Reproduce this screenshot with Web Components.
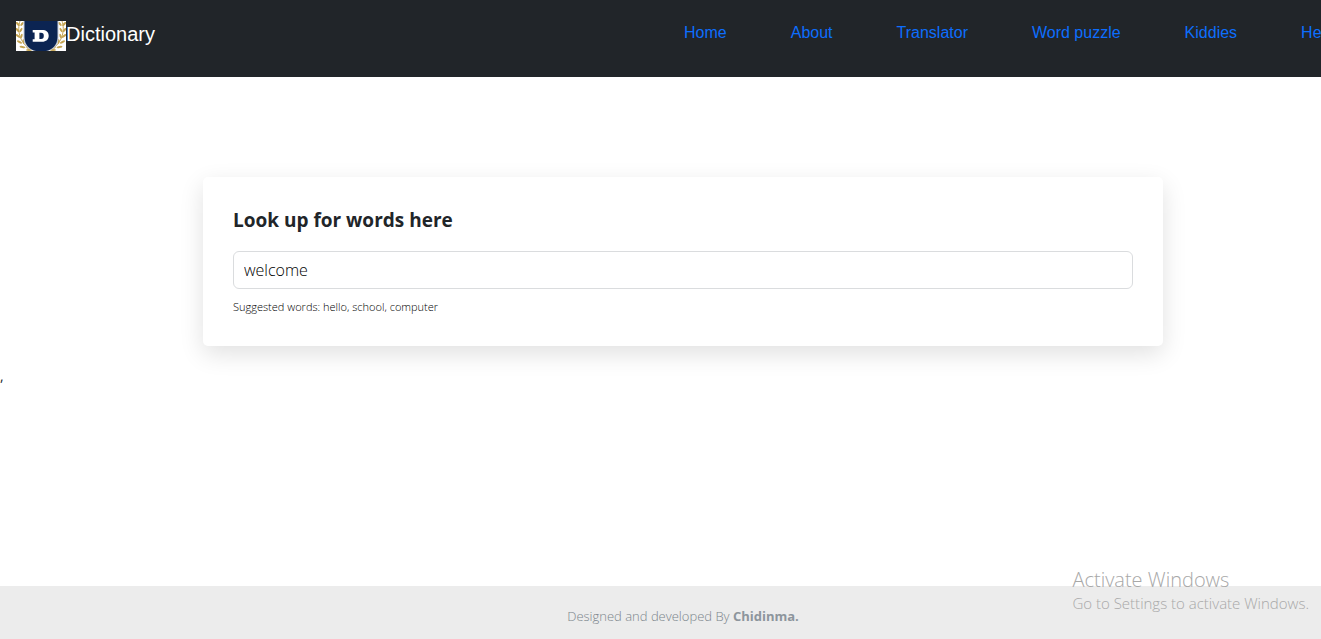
<!DOCTYPE html>
<html lang="en">
<head>
<meta charset="utf-8">
<title>Dictionary</title>
<style>
  html, body { margin: 0; height: 100%; }
  body { overflow: hidden; background: #fff; color: #212529; font-family: "Open Sans", "Noto Sans", sans-serif; }
</style>
</head>
<body>
<dictionary-app>
  <site-header slot="header">
    <brand-logo slot="brand">Dictionary</brand-logo>
    <nav-link href="#home">Home</nav-link>
    <nav-link href="#about">About</nav-link>
    <nav-link href="#translator">Translator</nav-link>
    <nav-link href="#puzzle">Word puzzle</nav-link>
    <nav-link href="#kiddies">Kiddies</nav-link>
    <nav-link href="#help">Help</nav-link>
  </site-header>
  <word-search value="welcome">
    <span slot="title">Look up for words here</span>
    <span slot="hint">Suggested words: hello, school, computer</span>
  </word-search>
  <stray-text>,</stray-text>
  <site-footer slot="footer">Designed and developed By <strong>Chidinma.</strong></site-footer>
</dictionary-app>
<activation-notice>
  <span slot="title">Activate Windows</span>
  <span>Go to Settings to activate Windows.</span>
</activation-notice>

<script>
const define = (name, html, setup) => {
  const template = document.createElement('template');
  template.innerHTML = html;
  customElements.define(name, class extends HTMLElement {
    constructor() {
      super();
      this.attachShadow({ mode: 'open' }).append(template.content.cloneNode(true));
    }
    connectedCallback() { if (setup) setup(this, this.shadowRoot); }
  });
};

define('dictionary-app', `
  <style>
    :host { display: flex; flex-direction: column; min-height: 100vh; width: calc(100% + 45px); }
    main { flex: 1; padding-top: 100px; }
  </style>
  <slot name="header"></slot>
  <main><slot></slot></main>
  <slot name="footer"></slot>`);

define('site-header', `
  <style>
    :host { display: block; background: #212529; font-family: "Liberation Sans", Arial, sans-serif; }
    header { display: flex; justify-content: space-between; align-items: flex-start; padding: 20px 32px 26px 16px; }
    nav { display: flex; gap: 64px; }
  </style>
  <header><slot name="brand"></slot><nav aria-label="Main"><slot></slot></nav></header>`);

define('brand-logo', `
  <style>
    :host { display: block; }
    a { display: flex; color: #fff; font-size: 20px; line-height: 28px; text-decoration: none; }
    svg { display: block; width: 50px; height: 30px; margin-top: 1px; }
  </style>
  <a href="#home">
    <svg viewBox="0 0 50 30" aria-hidden="true">
      <rect width="50" height="30" fill="#fff"/>
      <g id="laurel">
        <path d="M4 0C1 9 3 21 15 29" fill="none" stroke="#c3a556" stroke-width="1"/>
        <g fill="#c4a350">
          <ellipse cx="1.800" cy="3" rx="2.500" ry="1.100" transform="rotate(50 1.800 3)"/>
          <ellipse cx="6" cy="3" rx="2.300" ry="1" transform="rotate(-50 6 3)"/>
          <ellipse cx="1.500" cy="9" rx="2.500" ry="1.100" transform="rotate(50 1.500 9)"/>
          <ellipse cx="5" cy="9" rx="2.400" ry="1" transform="rotate(-60 5 9)"/>
          <ellipse cx="2" cy="15" rx="2.600" ry="1.100" transform="rotate(38 2 15)"/>
          <ellipse cx="5.500" cy="15" rx="2.400" ry="1" transform="rotate(-75 5.500 15)"/>
          <ellipse cx="3.500" cy="21" rx="2.800" ry="1.100" transform="rotate(25 3.500 21)"/>
          <ellipse cx="7.500" cy="20.500" rx="2.400" ry="1" transform="rotate(80 7.500 20.500)"/>
          <ellipse cx="6.500" cy="26" rx="3" ry="1.100" transform="rotate(10 6.500 26)"/>
          <ellipse cx="11" cy="25.500" rx="2.400" ry="1" transform="rotate(65 11 25.500)"/>
          <ellipse cx="13" cy="29" rx="3" ry="1"/>
        </g>
      </g>
      <use href="#laurel" transform="translate(50 0) scale(-1 1)"/>
      <path d="M7.500 0V17C7.500 24 12 29 19 30H31C38 29 42.500 24 42.500 17V0Z" fill="#c5cbd7"/>
      <path d="M8.500 0V16C8.500 24 14 29 20 30H30C36 29 41.500 24 41.500 16V0Z" fill="#0b2452"/>
      <path fill="#fff" fill-rule="evenodd" d="M16.700 9H26C30.200 9 32.700 11 32.700 14.800S30.200 20.800 26 20.800H16.700V18.200H18.600V11.600H16.700ZM23.400 11.800V18H25C27 18 27.800 17 27.800 14.800S27 11.800 25 11.800Z"/>
    </svg>
    <slot></slot>
  </a>`);

define('nav-link', `
  <style>
    :host { display: block; }
    a { display: block; color: #0d6efd; font-size: 16px; line-height: 26px; text-decoration: none; white-space: nowrap; }
  </style>
  <a><slot></slot></a>`, (el, root) => {
    root.querySelector('a').href = el.getAttribute('href');
  });

define('word-search', `
  <style>
    :host { display: block; box-sizing: border-box; max-width: 960px; margin: 0 auto; padding: 30px; background: #fff; border-radius: 5px; box-shadow: 0 8px 24px rgba(0, 0, 0, .12); }
    label { display: block; font-size: 19px; line-height: 26px; font-weight: 700; }
    input { display: block; box-sizing: border-box; width: 100%; height: 38px; margin: 18px 0 9px; padding: 6px 10px; border: 1px solid #dadcde; border-radius: 6px; background: #fff; color: #000; font: 300 16px/24px "Open Sans", "Noto Sans", sans-serif; outline: 0; }
    p { margin: 0; color: #000; font-size: 11px; line-height: 18px; font-weight: 300; }
  </style>
  <label for="word"><slot name="title"></slot></label>
  <input id="word" type="text" aria-describedby="hint">
  <p id="hint"><slot name="hint"></slot></p>`, (el, root) => {
    root.querySelector('input').value = el.getAttribute('value');
  });

define('stray-text', `
  <style>:host { display: block; margin-top: 18px; font-size: 14px; line-height: 24px; }</style>
  <slot></slot>`);

define('site-footer', `
  <style>
    :host { display: block; background: #ececec; color: #7b848b; }
    footer { padding: 20px 16px 13px; text-align: center; font-size: 13px; line-height: 20px; font-weight: 300; }
    ::slotted(strong) { font-weight: 700; color: #8d959c; }
  </style>
  <footer><slot></slot></footer>`);

define('activation-notice', `
  <style>
    :host { position: absolute; right: 12px; bottom: 26px; display: block; color: #a8a8a8; font-weight: 300; pointer-events: none; white-space: nowrap; }
    div { font-size: 20px; line-height: 26px; }
    p { margin: 0; font-size: 15px; line-height: 20px; }
  </style>
  <div><slot name="title"></slot></div>
  <p><slot></slot></p>`);
</script>
</body>
</html>
